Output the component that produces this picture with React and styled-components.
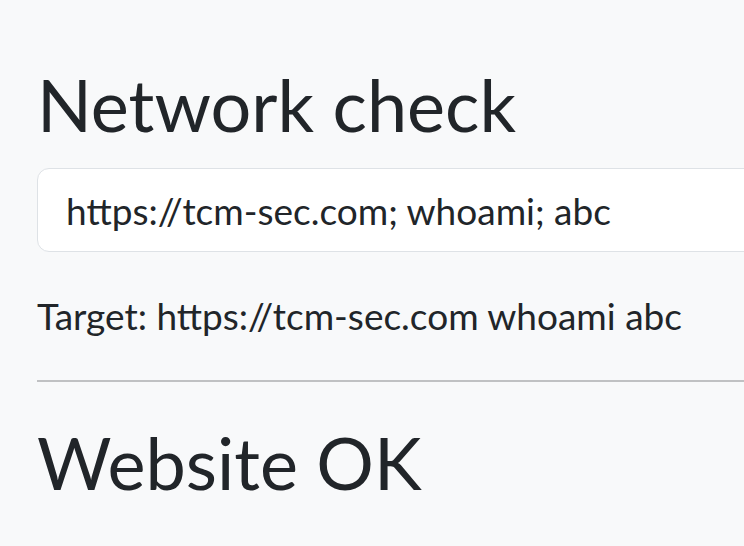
import React from 'react';
import styled, { createGlobalStyle } from 'styled-components';

const GlobalStyle = createGlobalStyle`
  html, body {
    margin: 0;
    padding: 0;
    overflow: hidden;
    background: #f8f9fa;
  }
  body {
    font-family: Lato, 'Liberation Sans', sans-serif;
    color: #212529;
  }
`;

const Container = styled.main`
  width: 800px;
  padding: 61px 0 0 37px;
  box-sizing: border-box;
`;

const Title = styled.h1`
  margin: 0 0 ${(props) => props.gap || 0}px;
  font-size: 72px;
  font-weight: 400;
  line-height: 1.2;
`;

const Input = styled.input`
  display: block;
  width: 100%;
  height: 84px;
  box-sizing: border-box;
  padding: 0 0 0 28px;
  border: 1.5px solid #dee2e6;
  border-radius: 12px;
  background: #fff;
  font-family: inherit;
  font-size: 37px;
  color: #212529;
  outline: none;
`;

const Target = styled.p`
  margin: 36px 0 0;
  font-size: 37px;
  line-height: 1.5;
`;

const Rule = styled.hr`
  margin: 36px 0 37px;
  border: 0;
  border-top: 2px solid #c0c1c3;
`;

export default function App() {
  return (
    <>
      <GlobalStyle />
      <Container>
        <Title gap={21}>Network check</Title>
        <Input readOnly value="https://tcm-sec.com; whoami; abc" />
        <Target>Target: https://tcm-sec.com whoami abc</Target>
        <Rule />
        <Title>Website OK</Title>
      </Container>
    </>
  );
}
